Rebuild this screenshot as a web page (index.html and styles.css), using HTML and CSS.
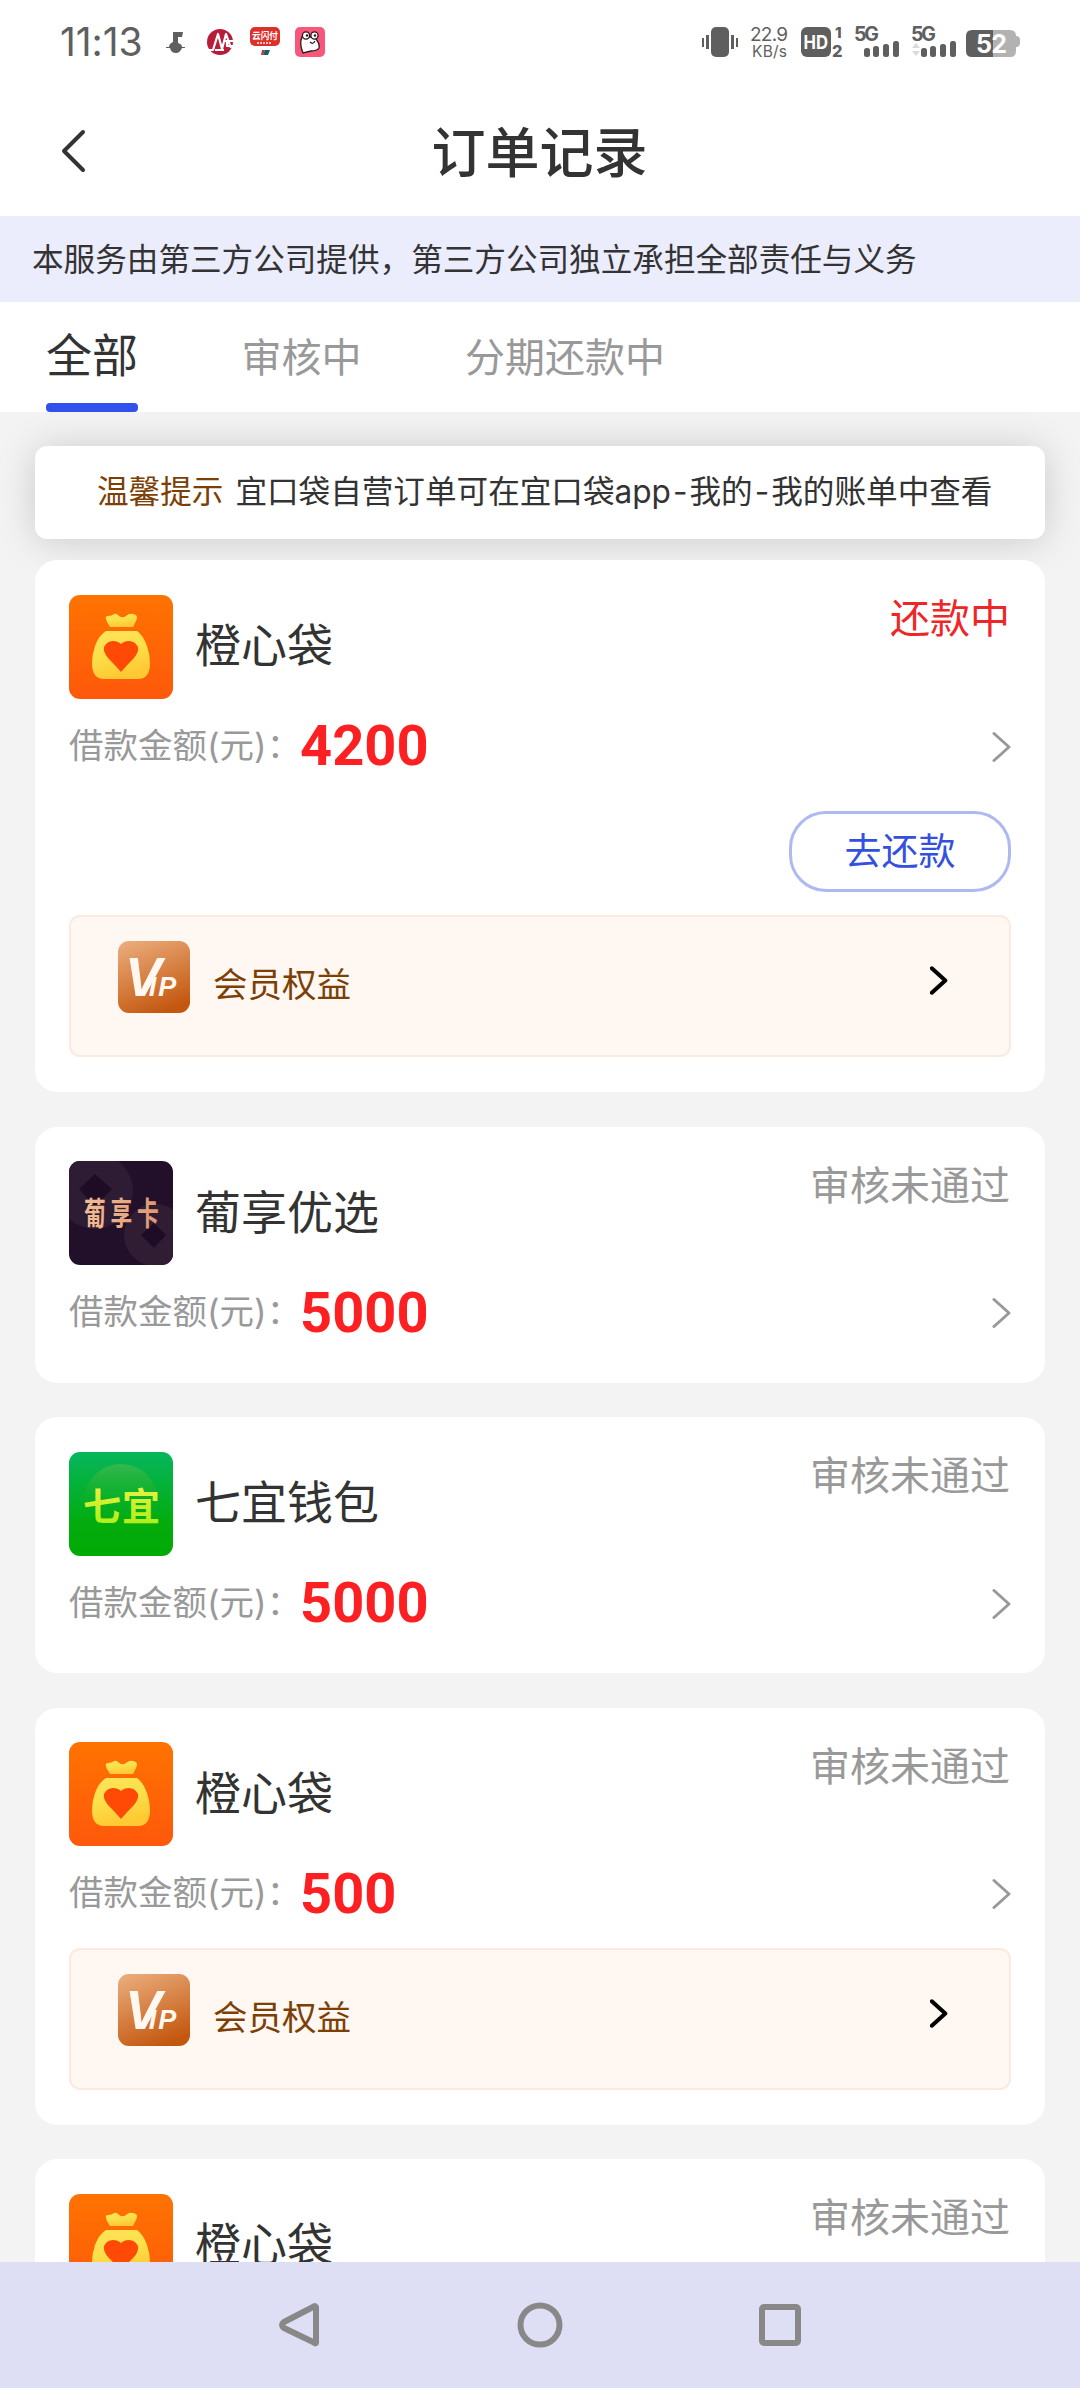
FILE: index.html
```html
<!DOCTYPE html>
<html lang="zh-CN">
<head>
<meta charset="utf-8">
<title>订单记录</title>
<link rel="stylesheet" href="styles.css">
</head>
<body>
<svg class="defs" aria-hidden="true">
  <defs>
    <linearGradient id="orange" x1="0" y1="0" x2="0" y2="1"><stop offset="0" stop-color="#ff7300"/><stop offset="1" stop-color="#ff580b"/></linearGradient>
    <linearGradient id="gold" x1="0" y1="0" x2="0.3" y2="1"><stop offset="0" stop-color="#ffe35a"/><stop offset="0.5" stop-color="#fbe04a"/><stop offset="1" stop-color="#ffc933"/></linearGradient>
    <linearGradient id="bronze" x1="0.2" y1="0" x2="0.6" y2="1"><stop offset="0" stop-color="#e9aa78"/><stop offset="1" stop-color="#c4570f"/></linearGradient>
    <linearGradient id="green" x1="0" y1="0" x2="0" y2="1"><stop offset="0" stop-color="#06b65c"/><stop offset="0.7" stop-color="#02ac0c"/><stop offset="1" stop-color="#02aa04"/></linearGradient>
    <linearGradient id="dome" x1="0" y1="0" x2="0" y2="1"><stop offset="0" stop-color="#35b84c"/><stop offset="0.75" stop-color="#04ac10" stop-opacity="0"/></linearGradient>
    <linearGradient id="lime" x1="0" y1="0" x2="0" y2="1"><stop offset="0" stop-color="#fbf24c"/><stop offset="1" stop-color="#a4ee10"/></linearGradient>
    <linearGradient id="rose" x1="0" y1="0" x2="1" y2="0"><stop offset="0" stop-color="#f3bd92"/><stop offset="1" stop-color="#dd9672"/></linearGradient>
  </defs>
  <symbol id="bag" viewBox="0 0 104 104">
    <rect width="104" height="104" rx="11" fill="url(#orange)"/>
    <path d="M37 24q-1-3 2-3 4 0 6-2 2-1 4 1 4 4 8 1 3-3 7-2 4 1 4 3 0 2-1 4l-3 6H41l-3-5z" fill="url(#gold)"/>
    <path d="M37 36h31q6 4 10 15 3 9 3 17 0 16-12 16H35q-12 0-12-16 0-8 3-17 4-11 11-15z" fill="url(#gold)"/>
    <path d="M52 77Q46 70 39 63q-5-6-4-11 3-6 9-6 5 0 8 3 3-3 8-3 6 0 9 6 1 5-4 11-7 7-13 14z" fill="#ff4a05"/>
  </symbol>
  <symbol id="chevron" viewBox="0 0 20 32">
    <path d="M2 2.500 17 16 2 29.500" fill="none" stroke="currentColor" stroke-width="var(--stroke)" stroke-linecap="round" stroke-linejoin="round"/>
  </symbol>
</svg>

<div class="screen">
  <div class="status-bar">
    <span class="clock">11:13</span>
    <svg class="notices" viewBox="0 0 162 32" width="162" height="32">
      <path d="M8 6h10l-1 5h-4v6q4 1 4 4h3v1h-3q-2 5-6 5-5 0-6-5H1v-1h3q0-3 4-5z" fill="#5f5f5f"/>
      <circle cx="55" cy="16" r="13" fill="#b81c39"/>
      <path d="M43 24h5l5-16 4 15 4-15 5 14M50 24h9M59 15h10m-7 0v5h6" fill="none" stroke="#fff" stroke-width="2.200" stroke-linejoin="round"/>
      <rect x="85" y="1" width="30" height="19" rx="5" fill="#de2f2b"/>
      <text class="pay" x="87" y="13" textLength="26" lengthAdjust="spacingAndGlyphs">云闪付</text>
      <path d="M92 17h15" stroke="#f8c5c0" stroke-width="2" stroke-dasharray="2 1"/>
      <path d="M97 24h3l-2 5h-2z" fill="#c03248"/><path d="M100 24h5l-2 5h-5z" fill="#10616b"/>
      <rect x="130" y="1" width="30" height="30" rx="5" fill="#f9567b"/>
      <path d="M136 14l1-3h10l4 2q4 5 3 9-2 3-8 3l-8 2q-3-7-2-13z" fill="#fff" stroke="#2c1920" stroke-width="1.300"/>
      <circle cx="141" cy="9.500" r="3.600" fill="#fff" stroke="#2c1920" stroke-width="1.300"/><circle cx="149.500" cy="9.500" r="3.600" fill="#fff" stroke="#2c1920" stroke-width="1.300"/>
      <circle cx="142" cy="9.500" r="1.200" fill="#2c1920"/><circle cx="150" cy="9.500" r="1.200" fill="#2c1920"/>
      <path d="M145 16q3 3 5-1" fill="none" stroke="#2c1920" stroke-width="1.200"/>
    </svg>
    <svg class="signals" viewBox="0 0 320 32" width="320" height="32">
      <g fill="#5f5f5f">
        <rect x="11" y="1" width="18" height="30" rx="5"/>
        <rect x="6" y="9" width="3" height="14"/><rect x="2" y="12" width="2" height="9"/><rect x="31" y="9" width="3" height="14"/><rect x="36" y="12" width="2" height="9"/>
        <text x="50" y="15" font-size="19" textLength="38">22.9</text>
        <text x="52" y="30.500" font-size="15.500" textLength="35">KB/s</text>
        <rect x="101" y="1" width="30" height="30" rx="6"/>
        <text x="135" y="12" font-size="15" font-weight="800">1</text><text x="132" y="30.500" font-size="16.500" font-weight="800">2</text>
        <text x="154" y="15" font-size="19.500" font-weight="700" textLength="25">5G</text>
        <rect x="164" y="22" width="6" height="9" rx="2.500"/><rect x="173" y="20" width="6" height="11" rx="2.500"/><rect x="183" y="18" width="6" height="13" rx="2.500"/><rect x="193" y="15" width="6" height="16" rx="2.500"/>
        <text x="211" y="15" font-size="19.500" font-weight="700" textLength="25">5G</text>
        <rect x="221" y="22" width="6" height="9" rx="2.500"/><rect x="230" y="20" width="6" height="11" rx="2.500"/><rect x="240" y="18" width="6" height="13" rx="2.500"/><rect x="250" y="15" width="6" height="16" rx="2.500"/>
        <path d="M212 22l4-5 4 5zM212 25h8l-4 5z" fill="#dadada"/>
      </g>
      <path d="M293 4h17q6 0 6 6 4 0 4 4v3q0 4-4 4v4q0 6-6 6h-17z" fill="#b2b2b2"/>
      <path d="M293 4h-21q-6 0-6 6v15q0 6 6 6h21z" fill="#5f5f5f"/>
      <g fill="#fff" font-weight="700"><text x="103.500" y="22.500" font-size="18.500" textLength="24.500" lengthAdjust="spacingAndGlyphs">HD</text><text x="276" y="27" font-size="25" textLength="31">52</text></g>
    </svg>
  </div>

  <header class="title-bar">
    <svg class="back" viewBox="0 0 26 44" width="26" height="44"><path d="M23 3 4 22l19 19" fill="none" stroke="#333" stroke-width="4" stroke-linecap="round" stroke-linejoin="round"/></svg>
    <h1>订单记录</h1>
  </header>

  <div class="banner">本服务由第三方公司提供，第三方公司独立承担全部责任与义务</div>

  <nav class="tabs">
    <a class="tab active">全部</a>
    <a class="tab">审核中</a>
    <a class="tab">分期还款中</a>
  </nav>

  <main class="list">
    <div class="tip"><span class="tip-label">温馨提示</span><span>宜口袋自营订单可在宜口袋app<span class="dash">-</span>我的<span class="dash">-</span>我的账单中查看</span></div>

    <article class="card first">
      <div class="head">
        <svg class="logo"><use href="#bag"/></svg>
        <h2>橙心袋</h2><span class="state due">还款中</span>
      </div>
      <div class="amount"><span class="label">借款金额(元)：</span><b>4200</b><svg class="more"><use href="#chevron"/></svg></div>
      <div class="actions"><button class="pay-button">去还款</button></div>
      <div class="benefit">
        <svg class="vip-icon" viewBox="0 0 72 72"><rect width="72" height="72" rx="11" fill="url(#bronze)"/><text x="7" y="55" font-size="55">V<tspan dx="-13" font-size="27">I</tspan><tspan dx="2" font-size="27">P</tspan></text></svg>
        <span>会员权益</span><svg class="go"><use href="#chevron"/></svg>
      </div>
    </article>

    <article class="card">
      <div class="head">
        <svg class="logo" viewBox="0 0 104 104">
          <clipPath id="clip"><rect width="104" height="104" rx="11"/></clipPath>
          <g clip-path="url(#clip)">
            <rect width="104" height="104" fill="#220f2a"/>
            <circle cx="26" cy="30" r="38" fill="#2e1b34"/><circle cx="86" cy="74" r="31" fill="#301d34"/>
            <path d="M26 13 43 28 26 45 10 28zM85 62 97 74 85 87 72 74z" fill="#1e0b25"/>
          </g>
          <text class="logo-text" x="22" y="64" font-size="32" letter-spacing="7" transform="scale(.68 1)" fill="url(#rose)">葡享卡</text>
        </svg>
        <h2>葡享优选</h2><span class="state">审核未通过</span>
      </div>
      <div class="amount"><span class="label">借款金额(元)：</span><b>5000</b><svg class="more"><use href="#chevron"/></svg></div>
    </article>

    <article class="card">
      <div class="head">
        <svg class="logo" viewBox="0 0 104 104">
          <rect width="104" height="104" rx="11" fill="url(#green)"/>
          <circle cx="52" cy="49" r="37" fill="url(#dome)"/>
          <text class="logo-text" x="14" y="68" font-size="38" textLength="77" fill="url(#lime)">七宜</text>
        </svg>
        <h2>七宜钱包</h2><span class="state">审核未通过</span>
      </div>
      <div class="amount"><span class="label">借款金额(元)：</span><b>5000</b><svg class="more"><use href="#chevron"/></svg></div>
    </article>

    <article class="card">
      <div class="head">
        <svg class="logo"><use href="#bag"/></svg>
        <h2>橙心袋</h2><span class="state">审核未通过</span>
      </div>
      <div class="amount"><span class="label">借款金额(元)：</span><b>500</b><svg class="more"><use href="#chevron"/></svg></div>
      <div class="benefit">
        <svg class="vip-icon" viewBox="0 0 72 72"><rect width="72" height="72" rx="11" fill="url(#bronze)"/><text x="7" y="55" font-size="55">V<tspan dx="-13" font-size="27">I</tspan><tspan dx="2" font-size="27">P</tspan></text></svg>
        <span>会员权益</span><svg class="go"><use href="#chevron"/></svg>
      </div>
    </article>

    <article class="card">
      <div class="head">
        <svg class="logo"><use href="#bag"/></svg>
        <h2>橙心袋</h2><span class="state">审核未通过</span>
      </div>
    </article>
  </main>

  <footer class="system-nav">
    <svg viewBox="0 0 48 48" width="48" height="48"><path d="M40 6v36Q39 43 37 41L8 27Q4 24 8 21L37 6Q39 4 40 6z"/></svg>
    <svg viewBox="0 0 48 48" width="48" height="48"><circle cx="24" cy="24" r="19.500"/></svg>
    <svg viewBox="0 0 48 48" width="48" height="48"><rect x="6" y="6" width="36" height="36" rx="2"/></svg>
  </footer>
</div>
</body>
</html>
```

FILE: styles.css
```css
* { box-sizing: border-box; }
body {
  margin: 0;
  background: #f3f3f3;
  color: #333;
  font-family: Inter, "Noto Sans CJK SC", sans-serif;
}
h1, h2 { margin: 0; font-weight: 400; }
svg { display: block; flex: none; overflow: visible; }
.defs { width: 0; height: 0; float: left; overflow: hidden; }

.screen {
  width: 1080px;
  height: 2388px;
  display: flex;
  flex-direction: column;
  overflow: hidden;
}
.screen > * { flex: none; }

.status-bar {
  height: 84px;
  background: #fff;
  padding: 0 60px 0 60px;
  display: flex;
  align-items: center;
}
.clock { width: 105px; font-size: 39px; line-height: 84px; color: #5f5f5f; letter-spacing: -.1px; white-space: nowrap; }
.signals { margin-left: auto; }
.signals text { font-family: Inter, sans-serif; }
.pay { font-size: 9.500px; font-weight: 700; fill: #fff; font-family: "Noto Sans CJK SC", sans-serif; }

.title-bar {
  height: 132px;
  background: #fff;
  padding: 0 61px 0 60px;
  display: flex;
  align-items: center;
}
.back { margin-top: 2px; }
.title-bar h1 {
  flex: 1;
  margin: 7px 26px 0 0;
  text-align: center;
  font-size: 54px;
  line-height: 80px;
  font-weight: 500;
}

.banner {
  height: 86px;
  padding-left: 32px;
  background: #ebecfc;
  font-size: 31.600px;
  line-height: 88px;
  white-space: nowrap;
}

.tabs {
  height: 110px;
  padding-left: 46px;
  background: #fff;
  display: flex;
  gap: 103.500px;
}
.tab {
  height: 110px;
  font-size: 40px;
  line-height: 111px;
  color: #999;
}
.tab.active {
  font-size: 46px;
  line-height: 107px;
  color: #333;
  display: flex;
  flex-direction: column;
}
.tab.active::after {
  content: "";
  height: 9px;
  margin-top: -6px;
  flex: none;
  border-radius: 4px;
  background: #3150ec;
}

.list {
  min-height: 0;
  overflow: hidden;
  padding: 34px 35px 0;
  display: flex;
  flex-direction: column;
  gap: 34.500px;
}
.screen > .list { flex: 1 1 0; }
.list > * { flex: none; }

.tip {
  height: 93px;
  padding: 0 0 7px 62px;
  display: flex;
  align-items: center;
  gap: 12px;
  background: #fff;
  border-radius: 12px;
  box-shadow: 0 2px 38px rgba(0, 0, 0, .17);
  font-size: 31.600px;
  white-space: nowrap;
}
.tip-label { color: #7c4006; }
.dash { margin: 0 2px; }

.card {
  position: relative;
  padding: 35px 34px;
  background: #fff;
  border-radius: 22px;
}
.card.first { margin-top: -13.500px; }
.head {
  height: 103px;
  display: flex;
  align-items: center;
}
.logo { width: 104px; height: 104px; }
.logo-text { font-family: "Noto Sans CJK SC", sans-serif; font-weight: 700; }
.head h2 { margin: -3px 0 0 22px; font-size: 46px; line-height: 66px; }
.state {
  align-self: flex-start;
  margin: -6px 1px 0 auto;
  font-size: 40px;
  line-height: 60px;
  color: #999;
}
.state.due { color: #ee2626; }

.amount {
  height: 71px;
  margin-top: 12px;
  display: flex;
  align-items: center;
}
.label { width: 231px; margin-top: -6px; font-size: 34.500px; color: #999; white-space: nowrap; }
.amount b {
  margin-top: 2px;
  font-family: Roboto, sans-serif;
  font-size: 56px;
  line-height: 71px;
  font-weight: 700;
  color: #fd2022;
}
.more { width: 20px; height: 32px; margin: 2px -1px 0 auto; color: #999; --stroke: 3; }

.actions { margin-top: 30px; display: flex; justify-content: flex-end; }
.pay-button {
  width: 222px;
  height: 81px;
  padding: 0 0 5px;
  border: 3px solid #afb9f1;
  border-radius: 37px;
  background: #fff;
  color: #3350df;
  font: 37px/68px "Noto Sans CJK SC", sans-serif;
}

.benefit {
  height: 142px;
  margin-top: 19px;
  padding: 24px 61px 0 47px;
  display: flex;
  align-items: flex-start;
  border: 2px solid #fbeadf;
  border-radius: 11px;
  background: #fff7f1;
  color: #7c4006;
  font-size: 34.500px;
  line-height: 50px;
}
.actions + .benefit { margin-top: 23px; }
.benefit span { margin: 19px 0 0 23px; }
.vip-icon { width: 72px; height: 72px; }
.vip-icon text { fill: #fff8f0; font-family: "Liberation Sans", sans-serif; font-weight: 700; font-style: italic; }
.go { width: 18px; height: 29px; margin: 25px 0 0 auto; color: #000; --stroke: 4.500; }

.system-nav {
  height: 126px;
  background: #dedff5;
  display: flex;
  justify-content: center;
  align-items: center;
  gap: 192px;
}
.system-nav svg { fill: none; stroke: #888; stroke-width: 6; stroke-linejoin: round; }
```
